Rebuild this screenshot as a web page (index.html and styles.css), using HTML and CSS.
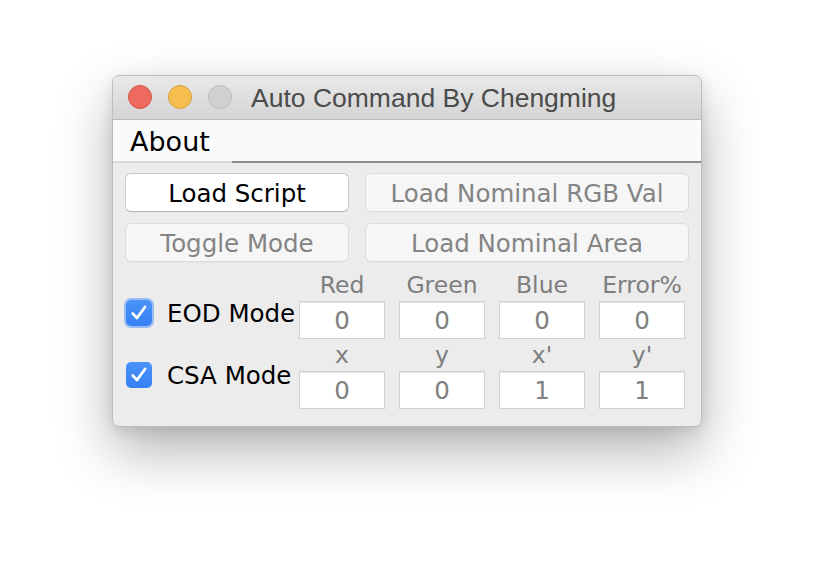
FILE: index.html
```html
<!DOCTYPE html>
<html>
<head>
<meta charset="utf-8">
<link rel="stylesheet" href="styles.css">
</head>
<body>
<div class="window">
  <div class="titlebar">
    <div class="lights">
      <span class="light red"></span>
      <span class="light yellow"></span>
      <span class="light gray"></span>
    </div>
    <div class="title">Auto Command By Chengming</div>
  </div>
  <div class="menubar">
    <div class="menu-item">About</div>
    <div class="menu-rest"></div>
  </div>
  <div class="content">
    <div class="buttons">
      <button class="btn">Load Script</button>
      <button class="btn disabled">Load Nominal RGB Val</button>
      <button class="btn disabled">Toggle Mode</button>
      <button class="btn disabled">Load Nominal Area</button>
    </div>
    <div class="fields">
      <label class="check check-eod"><span class="box focus"><svg viewBox="0 0 26 26" width="26" height="26"><path d="M6.8 13.6 L11 18 L19 7" fill="none" stroke="#fff" stroke-width="2.8" stroke-linecap="round" stroke-linejoin="round"/></svg></span><span class="check-text">EOD Mode</span></label>
      <div class="lbl l1">Red</div>
      <div class="lbl l2">Green</div>
      <div class="lbl l3">Blue</div>
      <div class="lbl l4">Error%</div>
      <div class="field f1">0</div>
      <div class="field f2">0</div>
      <div class="field f3">0</div>
      <div class="field f4">0</div>
      <label class="check check-csa"><span class="box"><svg viewBox="0 0 26 26" width="26" height="26"><path d="M6.8 13.6 L11 18 L19 7" fill="none" stroke="#fff" stroke-width="2.8" stroke-linecap="round" stroke-linejoin="round"/></svg></span><span class="check-text">CSA Mode</span></label>
      <div class="lbl l1 r2">x</div>
      <div class="lbl l2 r2">y</div>
      <div class="lbl l3 r2">x'</div>
      <div class="lbl l4 r2">y'</div>
      <div class="field f1 r2">0</div>
      <div class="field f2 r2">0</div>
      <div class="field f3 r2">1</div>
      <div class="field f4 r2">1</div>
    </div>
  </div>
</div>
</body>
</html>
```

FILE: styles.css
```css
html, body {
  margin: 0;
  padding: 0;
  background: #ffffff;
}
body {
  padding: 75px 0 0 112px;
  min-height: 574px;
  box-sizing: border-box;
  font-family: "DejaVu Sans", sans-serif;
}
.window {
  width: 588px;
  border: 1px solid #bdbdbd;
  border-radius: 7px;
  background: #ececec;
  overflow: hidden;
  box-shadow: 0 24px 55px rgba(0,0,0,0.30), 0 4px 14px rgba(0,0,0,0.10);
}
.titlebar {
  height: 43px;
  display: flex;
  align-items: center;
  background: linear-gradient(#e9e9e9, #d4d4d4);
  border-bottom: 1px solid #b9b9b9;
  padding-left: 15px;
}
.lights {
  display: flex;
  gap: 16px;
  margin-top: -1px;
}
.light {
  width: 22px;
  height: 22px;
  border-radius: 50%;
  display: block;
}
.red { background: #ee695e; border: 1px solid #d5564b; }
.yellow { background: #f6be4f; border: 1px solid #d9a03a; }
.gray { background: #d1d1d1; border: 1px solid #bcbcbc; }
.title {
  font-family: "Liberation Sans", sans-serif;
  font-size: 26.5px;
  color: #4b4b4b;
  margin-left: 19px;
  margin-top: 1px;
}
.menubar {
  display: flex;
  height: 43px;
  background: #fafafa;
}
.menu-item {
  width: 119px;
  padding-left: 17px;
  box-sizing: border-box;
  font-size: 27px;
  line-height: 44px;
  color: #000;
  border-bottom: 2px solid #d8d8d8;
}
.menu-rest {
  flex: 1;
  border-bottom: 2px solid #8c8c8c;
}
.content {
  padding: 10px 12px 17px 12px;
}
.buttons {
  display: grid;
  grid-template-columns: 224px 324px;
  column-gap: 16px;
  row-gap: 11px;
}
.btn {
  height: 39px;
  font-family: "DejaVu Sans", sans-serif;
  font-size: 24.5px;
  border-radius: 6px;
  padding: 2px 0 0 0;
  background: #ffffff;
  color: #000;
  border: 1px solid #c9c9c9;
  border-bottom-color: #b9b9b9;
  box-shadow: 0 0.5px 0 rgba(0,0,0,0.05);
}
.btn.disabled {
  background: #f6f6f6;
  color: #848484;
  border: 1px solid #dcdcdc;
}
.fields {
  display: grid;
  margin-top: 11px;
  grid-template-columns: 160px repeat(4, 86px);
  column-gap: 14px;
  grid-template-rows: 28px 38px 32px 38px;
}
.lbl {
  grid-row: 1;
  text-align: center;
  font-size: 23.5px;
  color: #7e7e7e;
  line-height: 24px;
}
.lbl.r2 { grid-row: 3; line-height: 32px; }
.l1 { grid-column: 2; }
.l2 { grid-column: 3; }
.l3 { grid-column: 4; }
.l4 { grid-column: 5; }
.field {
  grid-row: 2;
  background: #ffffff;
  border: 1px solid #cfcfcf;
  box-shadow: inset 0 1px 0 #e6e6e6;
  text-align: center;
  font-size: 24.5px;
  line-height: 38px;
  color: #808080;
}
.field.r2 { grid-row: 4; }
.f1 { grid-column: 2; }
.f2 { grid-column: 3; }
.f3 { grid-column: 4; }
.f4 { grid-column: 5; }
.check {
  grid-column: 1;
  display: flex;
  align-items: center;
  font-size: 24.5px;
  color: #000;
  margin-left: 1px;
  white-space: nowrap;
  width: 180px;
}
.check-eod {
  grid-row: 1 / 3;
  align-self: end;
  margin-bottom: 11px;
}
.check-csa {
  grid-row: 3 / 5;
  align-self: center;
  margin-top: 1px;
}
.box {
  width: 26px;
  height: 26px;
  border-radius: 5px;
  background: linear-gradient(#4b93f8, #3680f5);
  display: block;
  flex: none;
}
.box svg { display: block; }
.box.focus {
  box-shadow: 0 0 0 2px rgba(110,165,250,0.65);
}
.check-text {
  margin-left: 15px;
  padding-top: 2px;
}
```
